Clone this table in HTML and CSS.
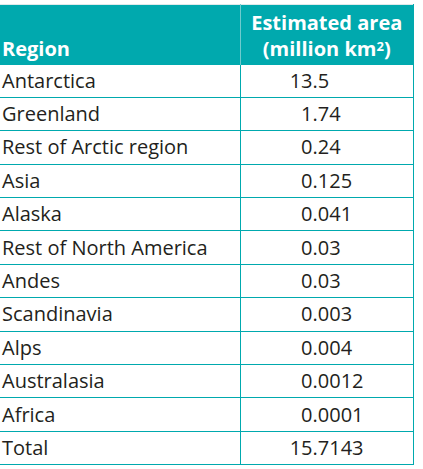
FILE: index.html
```html
<!DOCTYPE html>
<html lang="en">
<head>
    <meta charset="UTF-8">
    <meta name="viewport" content="width=device-width, initial-scale=1.0">
    <title>Glacier area by region</title>
    <link rel="stylesheet" href="styles.css">
</head>
<body>
    <table class="area-table">
        <thead>
            <tr>
                <th class="col-region">Region</th>
                <th class="col-area">Estimated area<br>(million km<sup>2</sup>)</th>
            </tr>
        </thead>
        <tbody>
            <tr><td>Antarctica</td><td class="num"><span class="int">13</span>.5</td></tr>
            <tr><td>Greenland</td><td class="num"><span class="int">1</span>.74</td></tr>
            <tr><td>Rest of Arctic region</td><td class="num"><span class="int">0</span>.24</td></tr>
            <tr><td>Asia</td><td class="num"><span class="int">0</span>.125</td></tr>
            <tr><td>Alaska</td><td class="num"><span class="int">0</span>.041</td></tr>
            <tr><td>Rest of North America</td><td class="num"><span class="int">0</span>.03</td></tr>
            <tr><td>Andes</td><td class="num"><span class="int">0</span>.03</td></tr>
            <tr><td>Scandinavia</td><td class="num"><span class="int">0</span>.003</td></tr>
            <tr><td>Alps</td><td class="num"><span class="int">0</span>.004</td></tr>
            <tr><td>Australasia</td><td class="num"><span class="int">0</span>.0012</td></tr>
            <tr><td>Africa</td><td class="num"><span class="int">0</span>.0001</td></tr>
            <tr><td>Total</td><td class="num"><span class="int">15</span>.7143</td></tr>
        </tbody>
    </table>
</body>
</html>
```

FILE: styles.css
```css
body {
    margin: 0;
    padding-top: 4px;
    background: #ffffff;
    font-family: "Open Sans", Arial, sans-serif;
    color: #231f20;
}

.area-table {
    width: 414px;
    border-collapse: collapse;
    table-layout: fixed;
    border-top: 1px solid #dfe9ea;
}

.area-table th {
    background: #00a9ae;
    color: #ffffff;
    font-size: 20px;
    font-weight: 700;
    line-height: 26px;
    height: 60px;
    padding: 0 0 3px 0;
    vertical-align: bottom;
    box-sizing: border-box;
}

.col-region {
    width: 240px;
    text-align: left;
    padding-left: 2px !important;
    border-right: 1px solid #6fcbce;
}

.col-area {
    text-align: center;
    border-right: 1px solid #00a9ae;
}

.col-area sup {
    font-size: 13px;
    line-height: 0;
    vertical-align: 5px;
}

.area-table td {
    font-size: 20px;
    line-height: 26px;
    height: 32.4px;
    padding: 0 2px;
    border-bottom: 1px solid #00a9ae;
    border-right: 1px solid #00a9ae;
    vertical-align: middle;
    white-space: nowrap;
}

.area-table td.num {
    padding-left: 49px;
}

.int {
    display: inline-block;
    width: 23px;
    text-align: right;
}
```
